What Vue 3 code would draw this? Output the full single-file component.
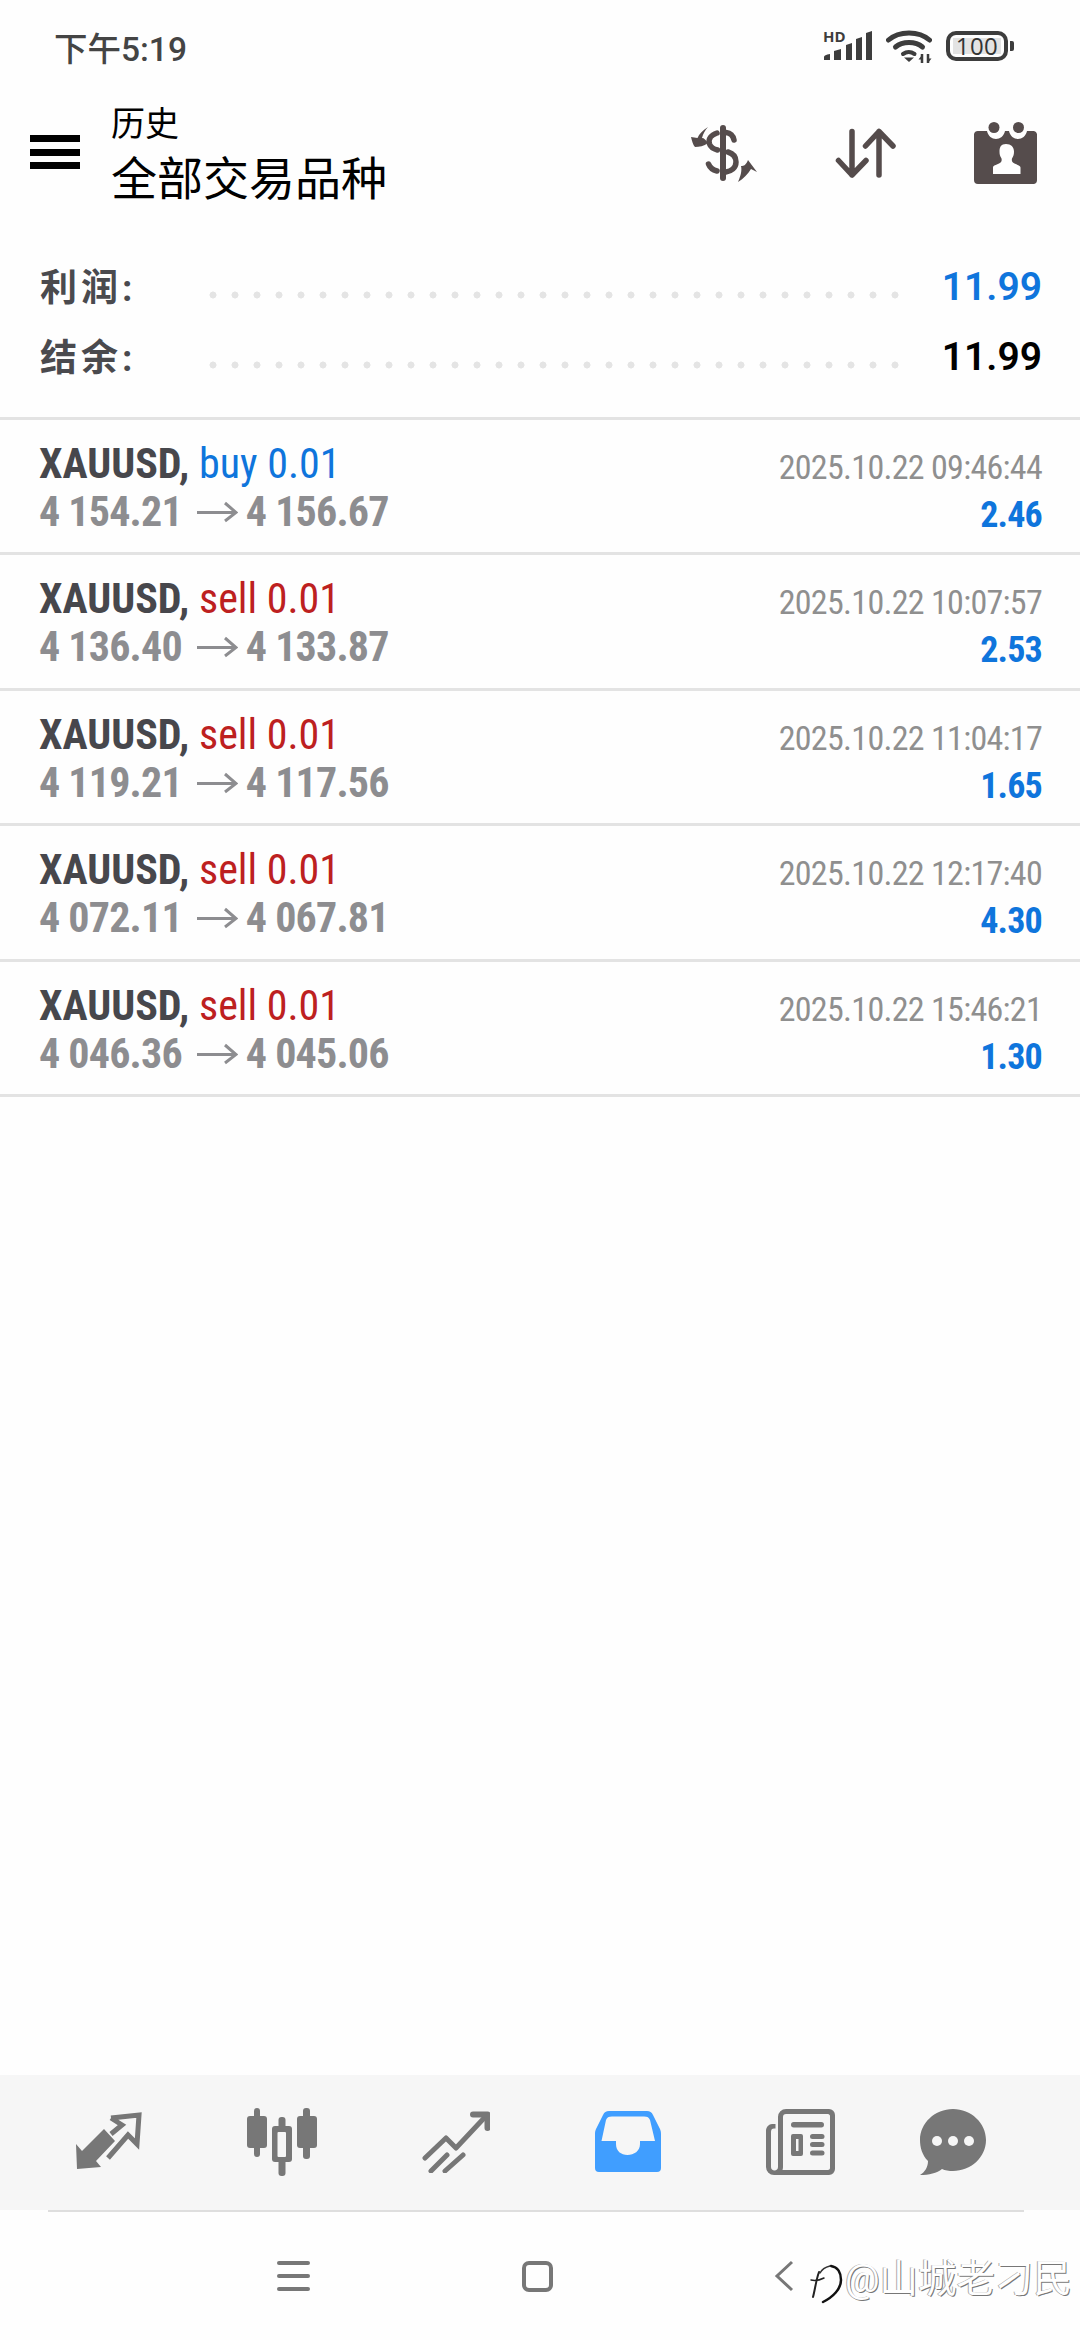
<template>
  <div class="screen">
    <div class="status">
      <span class="clock">下午5:19</span>
      <div class="status-icons">
        <div class="signal">
          <span class="hd">HD</span>
          <svg width="50" height="32" viewBox="0 0 50 32">
            <path d="M2 30v-3q0-2 6-3v6zM12 30V21l7-2v11zM24 30V15l6-2v17zM34 30V9l6-2v23zM44 30V3l6-2v29z" fill="#3d3d3d" />
          </svg>
        </div>
        <svg width="46" height="33" viewBox="0 0 46 33" fill="none" stroke="#3d3d3d" stroke-width="5" stroke-linecap="round">
          <path d="M2.500 10C13 .500 33 .500 43.500 10" />
          <path d="M9.500 17C16.500 11 29.500 11 36.500 17" />
          <path d="M17 24c3.500-2.500 8-2.500 11.500 0" stroke-width="4" />
          <path d="M23 32l-5-4.500h10z" fill="#3d3d3d" stroke="none" />
          <path d="M36 24v9M42 24v9" stroke-width="2.500" stroke-linecap="butt" />
          <path d="M36 25l-3.500 4.500H36zM42 33l3.500-4.500H42z" fill="#3d3d3d" stroke="none" />
        </svg>
        <div class="battery">
          <div class="cell"><span>100</span></div>
          <div class="nub"></div>
        </div>
      </div>
    </div>

    <header class="topbar">
      <div class="burger"><i></i><i></i><i></i></div>
      <div class="titles">
        <div class="sub">历史</div>
        <div class="main">全部交易品种</div>
      </div>
      <div class="actions">
        <svg width="68" height="58" viewBox="0 0 68 58" fill="#554c4c">
          <path d="M18 2C13 5 9 9 7.500 13L1 12c1 4 2 8 4 10 4 0 9-1 13-4-2-3-4-5-6-5 1-4 3-8 6-11z" />
          <path d="M48 57c3-7 4-12 3-16 3 0 5-1 7-6l9 12-6-3c-3 5-8 10-13 13z" />
          <rect x="30" y="0" width="6" height="56" rx="3" />
          <path d="M44 15C43 10 40 8 36 7.500M27 8c-6 2-9 6-7.500 11 1 3 4 5 8 6M38 27c5 1.500 8 5 8 10 0 6-5 9.500-10 10M27 46c-4-1-7-3-8.500-7" fill="none" stroke="#554c4c" stroke-width="5.500" stroke-linecap="round" />
        </svg>
        <svg width="62" height="52" viewBox="0 0 62 52" fill="none" stroke="#554c4c" stroke-width="5.500" stroke-linecap="round" stroke-linejoin="round">
          <path d="M17 3.500V47M3.500 32.500 17 47l14-14.500" />
          <path d="M44 3.500V47M30.500 18 44 3.500 58 18" />
        </svg>
        <svg width="64" height="64" viewBox="0 0 64 64">
          <path d="M4 9h9c1 5 5 8 9 8s8-3 9-8h4c1 5 5 8 9 8s8-3 9-8h7a4 4 0 0 1 3 3v46a4 4 0 0 1-3 4H4a4 4 0 0 1-4-4V12a4 4 0 0 1 4-3z" fill="#554c4c" />
          <circle cx="20" cy="5.500" r="5.500" fill="#554c4c" />
          <circle cx="44.500" cy="5.500" r="5.500" fill="#554c4c" />
          <path d="M32 22c5 0 8 3 8 7.500 0 3-.500 4.500-2 7-.500 2.500 0 4 2.500 5 3 1.500 6 2 6 4V52H19v-6.500c0-2 3-2.500 6-4 2.500-1 3-2.500 2.500-5-1.500-2.500-2-4-2-7 0-4.500 1.500-7.500 6.500-7.500z" fill="#fff" />
        </svg>
      </div>
    </header>

    <section class="summary">
      <div class="sum-row">
        <span class="sum-label">利润:</span>
        <span class="dots"></span>
        <span class="sum-val blue">11.99</span>
      </div>
      <div class="sum-row">
        <span class="sum-label">结余:</span>
        <span class="dots"></span>
        <span class="sum-val">11.99</span>
      </div>
    </section>

    <ul class="trades">
      <li v-for="t in trades" :key="t.time" class="trade">
        <div class="trade-left">
          <div class="line1">
            <b>XAUUSD,</b>{{ " " }}<span :class="t.side === 'buy' ? 'buy' : 'sell'">{{ t.side }} 0.01</span>
          </div>
          <div class="line2">
            <span>{{ t.open }}</span>
            <svg width="41" height="22" viewBox="0 0 41 22" fill="none" stroke="#8d8d90" stroke-width="3">
              <path d="M0 11.500h39M28 2l11 9.500L28 20" />
            </svg>
            <span>{{ t.close }}</span>
          </div>
        </div>
        <div class="trade-right">
          <div class="stamp">{{ t.time }}</div>
          <div class="profit">{{ t.profit }}</div>
        </div>
      </li>
    </ul>

    <div class="spacer"></div>

    <nav class="tabs">
      <svg width="66" height="60" viewBox="0 0 66 60">
        <path d="M0 32l6 7 22-22 11 12-19 20 5 6-24 2z" fill="#777" />
        <path d="M35 6 63 3l-2 29-9-9-20 23M35 6l11 7-11 9" fill="none" stroke="#777" stroke-width="5" />
      </svg>
      <svg width="70" height="68" viewBox="0 0 70 68" fill="#777">
        <rect x="7" y="0" width="6" height="49" rx="3" />
        <rect x="0" y="8" width="20" height="32" rx="3" />
        <rect x="56" y="0" width="7" height="51" rx="3" />
        <rect x="50" y="8" width="20" height="32" rx="3" />
        <rect x="31.500" y="9" width="7" height="59" rx="3" />
        <rect x="25" y="18" width="20" height="36" rx="3" />
        <rect x="30.500" y="24" width="8.500" height="25" rx="1" fill="#f6f6f6" />
      </svg>
      <svg width="68" height="62" viewBox="0 0 68 62" fill="none" stroke="#777" stroke-width="5" stroke-linecap="round" stroke-linejoin="round">
        <path d="M3 47 24 27l10 10L64 5" />
        <path d="M51 3.500h14.500V17" stroke-width="6" />
        <path d="M9 60 25 44M23 60 41 44" />
      </svg>
      <svg width="66" height="62" viewBox="0 0 66 62">
        <path fill-rule="evenodd" d="M14 0h38c3 0 4.500 1 6 4l7 14c.700 1.500 1 3 1 5v34a4 4 0 0 1-4 4H4a4 4 0 0 1-4-4V23c0-2 .300-3.500 1-5L8 4c1.500-3 3-4 6-4zm3 5.500c-3.500 0-5 1-6 3.500L6.500 30H21v3c0 7 5 11 11.500 11S45 40 45 33v-3h15L55 9c-1-2.500-2.500-3.500-6-3.500z" fill="#409eff" />
      </svg>
      <svg width="69" height="66" viewBox="0 0 69 66">
        <path fill-rule="evenodd" d="M20 0h43a6 6 0 0 1 6 6v54a6 6 0 0 1-6 6H8a8 8 0 0 1-8-8V22c0-4 3-7 6-7h3.500v4.500H8c-2 0-3 1-3 3.500v35c0 2 1.500 3.500 3.500 3.500s3.500-1.500 3.500-3.500V8a8 8 0 0 1 8-8zm0 5c-2 0-3 1-3 3v50c0 1-.200 2-.500 3H62c1 0 2-1 2-2V7c0-1-1-2-2-2z" fill="#777" />
        <rect x="25" y="13" width="33" height="5.500" rx="2.700" fill="#777" />
        <path fill-rule="evenodd" d="M27 25h8a2 2 0 0 1 2 2v18a2 2 0 0 1-2 2h-8a2 2 0 0 1-2-2V27a2 2 0 0 1 2-2zm3 5v12h2.500V30z" fill="#777" />
        <rect x="44" y="25" width="14.500" height="5" rx="2.500" fill="#777" />
        <rect x="44" y="33" width="14.500" height="5" rx="2.500" fill="#777" />
        <rect x="44" y="41.500" width="14.500" height="5" rx="2.500" fill="#777" />
      </svg>
      <svg class="chat" width="66" height="66" viewBox="0 0 66 66">
        <path d="M33 0c18 0 33 14 33 31S51 62 33 62c-4 0-8-.500-11-2-5 4-13 6-22 6 5-3 8-8 8-14C2 46 0 38 0 31 0 14 15 0 33 0z" fill="#777" />
        <circle cx="17" cy="32" r="5" fill="#f6f6f6" />
        <circle cx="33" cy="32" r="5" fill="#f6f6f6" />
        <circle cx="49" cy="32" r="5" fill="#f6f6f6" />
      </svg>
    </nav>
    <div class="tabs-rule"><i></i></div>

    <footer class="sysnav">
      <div class="sys-menu"><i></i><i></i><i></i></div>
      <div class="sys-home"></div>
      <svg class="sys-back" width="20" height="32" viewBox="0 0 20 32" fill="none" stroke="#777" stroke-width="3">
        <path d="M18 2 3 16l15 14" />
      </svg>
      <!-- watermark sits over the nav bar -->
      <div class="watermark">
        <svg width="34" height="44" viewBox="0 0 34 44" fill="none" stroke-linecap="round">
          <path d="M22 4c7 1 10 7 10 14 0 9-8 17-18 22" stroke="#111" stroke-width="2.500" />
          <path d="M11 11c2-4 6-6 10-7" stroke="#333" stroke-width="1.500" />
          <path d="M10 10C7 18 6 28 4 35" stroke="#222" stroke-width="2" />
          <path d="M2 18c4 1 9 0 13-2" stroke="#222" stroke-width="1.500" />
        </svg>
        <span>@山城老刁民</span>
      </div>
    </footer>
  </div>
</template>

<script setup>
const trades = [
  { side: "buy", open: "4 154.21", close: "4 156.67", time: "2025.10.22 09:46:44", profit: "2.46" },
  { side: "sell", open: "4 136.40", close: "4 133.87", time: "2025.10.22 10:07:57", profit: "2.53" },
  { side: "sell", open: "4 119.21", close: "4 117.56", time: "2025.10.22 11:04:17", profit: "1.65" },
  { side: "sell", open: "4 072.11", close: "4 067.81", time: "2025.10.22 12:17:40", profit: "4.30" },
  { side: "sell", open: "4 046.36", close: "4 045.06", time: "2025.10.22 15:46:21", profit: "1.30" },
];
</script>

<style>
html, body { margin: 0; background: #fff; }
</style>

<style scoped>
.screen {
  width: 1080px;
  height: 2340px;
  display: flex;
  flex-direction: column;
  overflow: hidden;
  background: #fefefe;
  font-family: Roboto, "Noto Sans CJK SC", sans-serif;
}

.status {
  height: 92px;
  padding: 0 66px 0 54px;
  display: flex;
  align-items: center;
  justify-content: space-between;
  box-sizing: border-box;
}
.clock { font-size: 33.500px; font-weight: 500; color: #444; }
.status-icons { display: flex; align-items: center; gap: 14px; }
.signal { position: relative; height: 32px; }
.signal svg { display: block; }
.hd {
  position: absolute;
  left: 1px;
  top: -2px;
  font: 700 15px/16px "Open Sans", sans-serif;
  color: #3d3d3d;
}
.battery { display: flex; align-items: center; gap: 2px; margin-left: 0; }
.cell {
  width: 62px;
  height: 30px;
  box-sizing: border-box;
  border: 4px solid #3d3d3d;
  border-radius: 10px;
  padding: 3px;
  display: flex;
}
.cell span {
  flex: 1;
  background: #e3e3e3;
  color: #333;
  font-family: "Open Sans", sans-serif;
  font-size: 24px;
  line-height: 16px;
  letter-spacing: .5px;
  text-align: center;
  overflow: visible;
  white-space: nowrap;
}
.nub { width: 4px; height: 10px; background: #3d3d3d; border-radius: 0 2px 2px 0; }

.topbar {
  height: 136px;
  display: flex;
  align-items: center;
  padding-left: 30px;
}
.burger { width: 50px; display: flex; flex-direction: column; gap: 6.500px; margin-bottom: 16px; }
.burger i { height: 7px; background: #000; }
.titles { margin-left: 31px; padding-bottom: 8px; color: #000; }
.sub { font-size: 34px; line-height: 40px; }
.main { font-size: 46px; line-height: 60px; margin-top: 5px; }
.actions {
  margin-left: auto;
  margin-right: 42px;
  margin-bottom: 12px;
  display: flex;
  align-items: center;
  gap: 77px;
}

.summary { padding: 22px 38px 0 40px; height: 192px; box-sizing: border-box; border-bottom: 3px solid #e3e3e3; }
.sum-row { height: 70px; display: flex; align-items: center; }
.sum-label { width: 162px; font-size: 37px; font-weight: 700; letter-spacing: 4px; color: #4a4a4e; }
.dots {
  flex: 1;
  height: 8px;
  margin: 20px 39px 0 0;
  background: radial-gradient(circle, #e4e4e4 3.200px, transparent 3.800px) 0 0 / 22px 8px repeat-x;
}
.sum-val { font-size: 39px; font-weight: 600; color: #000; margin-top: 4px; }
.blue { color: #0f75dc; }

.trades { list-style: none; margin: 0; padding: 0; }
.trade {
  height: 135.400px;
  box-sizing: border-box;
  border-bottom: 3px solid #e3e3e3;
  padding: 0 38px 0 39px;
  display: flex;
  justify-content: space-between;
}
.trade-left, .trade-right { font-stretch: condensed; }
.line1, .line2 {
  font-family: "Roboto Condensed", "Liberation Sans Narrow", Roboto, sans-serif;
  font-size: 42px;
  line-height: 48px;
  white-space: nowrap;
}
.line1 { margin-top: 20px; }
.line1 b { color: #47474c; }
.line2 { font-weight: 700; letter-spacing: -.8px; color: #8d8d90; display: flex; align-items: center; gap: 8px; }
.line2 svg { margin-left: 7px; }
.buy { color: #0f75dc; }
.sell { color: #bd2020; }
.trade-right { text-align: right; font-family: "Roboto Condensed", "Liberation Sans Narrow", Roboto, sans-serif; }
.stamp { font-size: 34px; letter-spacing: -.7px; line-height: 42px; margin-top: 26px; color: #8f8f8f; }
.profit { font-size: 36px; letter-spacing: -.8px; line-height: 42px; margin-top: 6px; font-weight: 700; color: #0f75dc; }

.spacer { flex: 1; }

.tabs {
  height: 135px;
  background: #f6f6f6;
  display: flex;
  align-items: center;
  gap: 105px;
  padding: 0 0 2px 76px;
  box-sizing: border-box;
}
.chat { margin-left: -20px; }
.tabs-rule { height: 2px; background: #fefefe; padding: 0 56px 0 48px; }
.tabs-rule i { display: block; height: 2px; background: #dedede; }

.sysnav {
  position: relative;
  height: 128px;
  display: flex;
  align-items: center;
  padding-left: 277px;
  box-sizing: border-box;
}
.sys-menu { width: 33px; display: flex; flex-direction: column; gap: 9px; }
.sys-menu i { height: 4px; border-radius: 2px; background: #777; }
.sys-home { width: 31px; height: 31px; box-sizing: border-box; border: 4px solid #777; border-radius: 7px; margin-left: 212px; }
.sys-back { margin-left: 221px; }
.watermark {
  position: absolute;
  left: 809px;
  top: 46px;
  display: flex;
  align-items: flex-start;
  gap: 2px;
  font-size: 38.500px;
  line-height: 42px;
  color: #fff;
  text-shadow: 1px 1px 0 #777, -1px 0 0 #aaa;
  white-space: nowrap;
}
.watermark svg { margin-top: 4px; }
</style>
